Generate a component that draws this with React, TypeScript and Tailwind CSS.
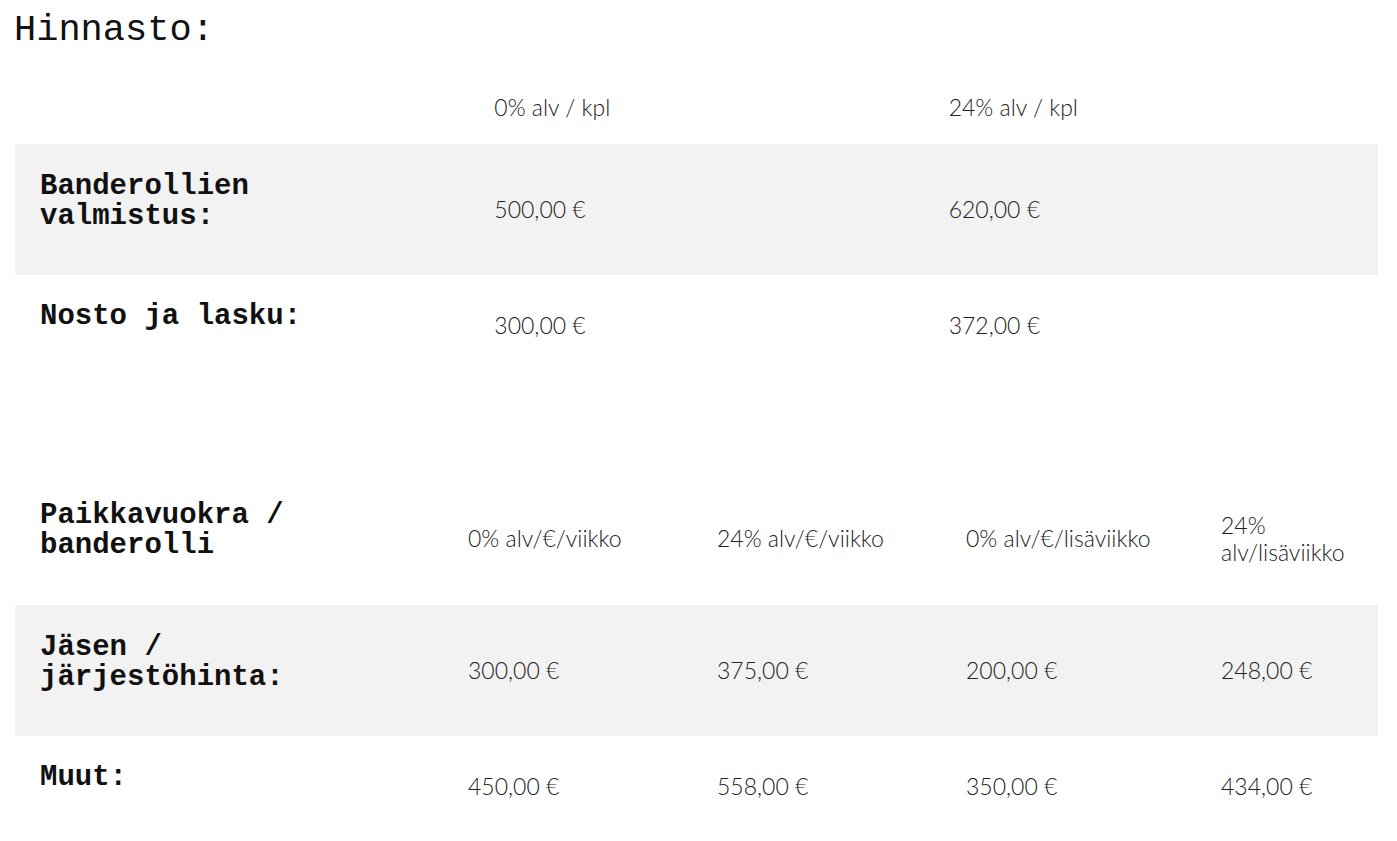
import React from 'react';

const mono = "font-['Liberation_Mono','Courier_New',monospace]";
const sans = "font-['Lato','Open_Sans',sans-serif] font-light";

type Row = { label: string[]; values: string[]; shaded?: boolean; h: string };

const unitRows: Row[] = [
  { label: ['Banderollien', 'valmistus:'], values: ['500,00 €', '620,00 €'], shaded: true, h: 'h-[131px]' },
  { label: ['Nosto ja lasku:'], values: ['300,00 €', '372,00 €'], h: 'h-[100px]' },
];

const rentRows: Row[] = [
  { label: ['Jäsen /', 'järjestöhinta:'], values: ['300,00 €', '375,00 €', '200,00 €', '248,00 €'], shaded: true, h: 'h-[131px]' },
  { label: ['Muut:'], values: ['450,00 €', '558,00 €', '350,00 €', '434,00 €'], h: 'h-[100px]' },
];

const Label: React.FC<{ lines: string[] }> = ({ lines }) => (
  <div className={`${mono} font-bold text-[29px] leading-[30px] text-[#111] pl-[25px] pb-[16px]`}>
    {lines.map((l) => (
      <div key={l}>{l}</div>
    ))}
  </div>
);

const Value: React.FC<{ children: React.ReactNode }> = ({ children }) => (
  <div className={`${sans} text-[23px] leading-[27px] text-[#222] pl-[25px]`}>{children}</div>
);

const App: React.FC = () => {
  return (
    <div className="min-h-screen bg-white pl-[15px] pr-[19px] pb-[5px]">
      <h1 className={`${mono} text-[37px] leading-[38px] text-[#111] pt-[11px] -ml-[1px]`}>Hinnasto:</h1>

      {/* hinnat per kappale */}
      <div className="mt-[21px]">
        <div className="grid grid-cols-3 h-[74px] items-center">
          <div />
          <Value>0% alv / kpl</Value>
          <Value>24% alv / kpl</Value>
        </div>
        {unitRows.map((r) => (
          <div key={r.label[0]} className={`grid grid-cols-3 items-center ${r.h} ${r.shaded ? 'bg-[#f2f2f2]' : ''}`}>
            <Label lines={r.label} />
            {r.values.map((v, i) => (
              <Value key={i}>{v}</Value>
            ))}
          </div>
        ))}
      </div>

      {/* paikkavuokra */}
      <div className="mt-[97px]">
        <div className="grid grid-cols-[428px_249px_249px_255px_1fr] h-[133px] items-center">
          <Label lines={['Paikkavuokra /', 'banderolli']} />
          <Value>0% alv/€/viikko</Value>
          <Value>24% alv/€/viikko</Value>
          <Value>0% alv/€/lisäviikko</Value>
          <Value>
            24%
            <br />
            alv/lisäviikko
          </Value>
        </div>
        {rentRows.map((r) => (
          <div
            key={r.label[0]}
            className={`grid grid-cols-[428px_249px_249px_255px_1fr] items-center ${r.h} ${r.shaded ? 'bg-[#f2f2f2]' : ''}`}
          >
            <Label lines={r.label} />
            {r.values.map((v, i) => (
              <Value key={i}>{v}</Value>
            ))}
          </div>
        ))}
      </div>
    </div>
  );
};

export default App;
